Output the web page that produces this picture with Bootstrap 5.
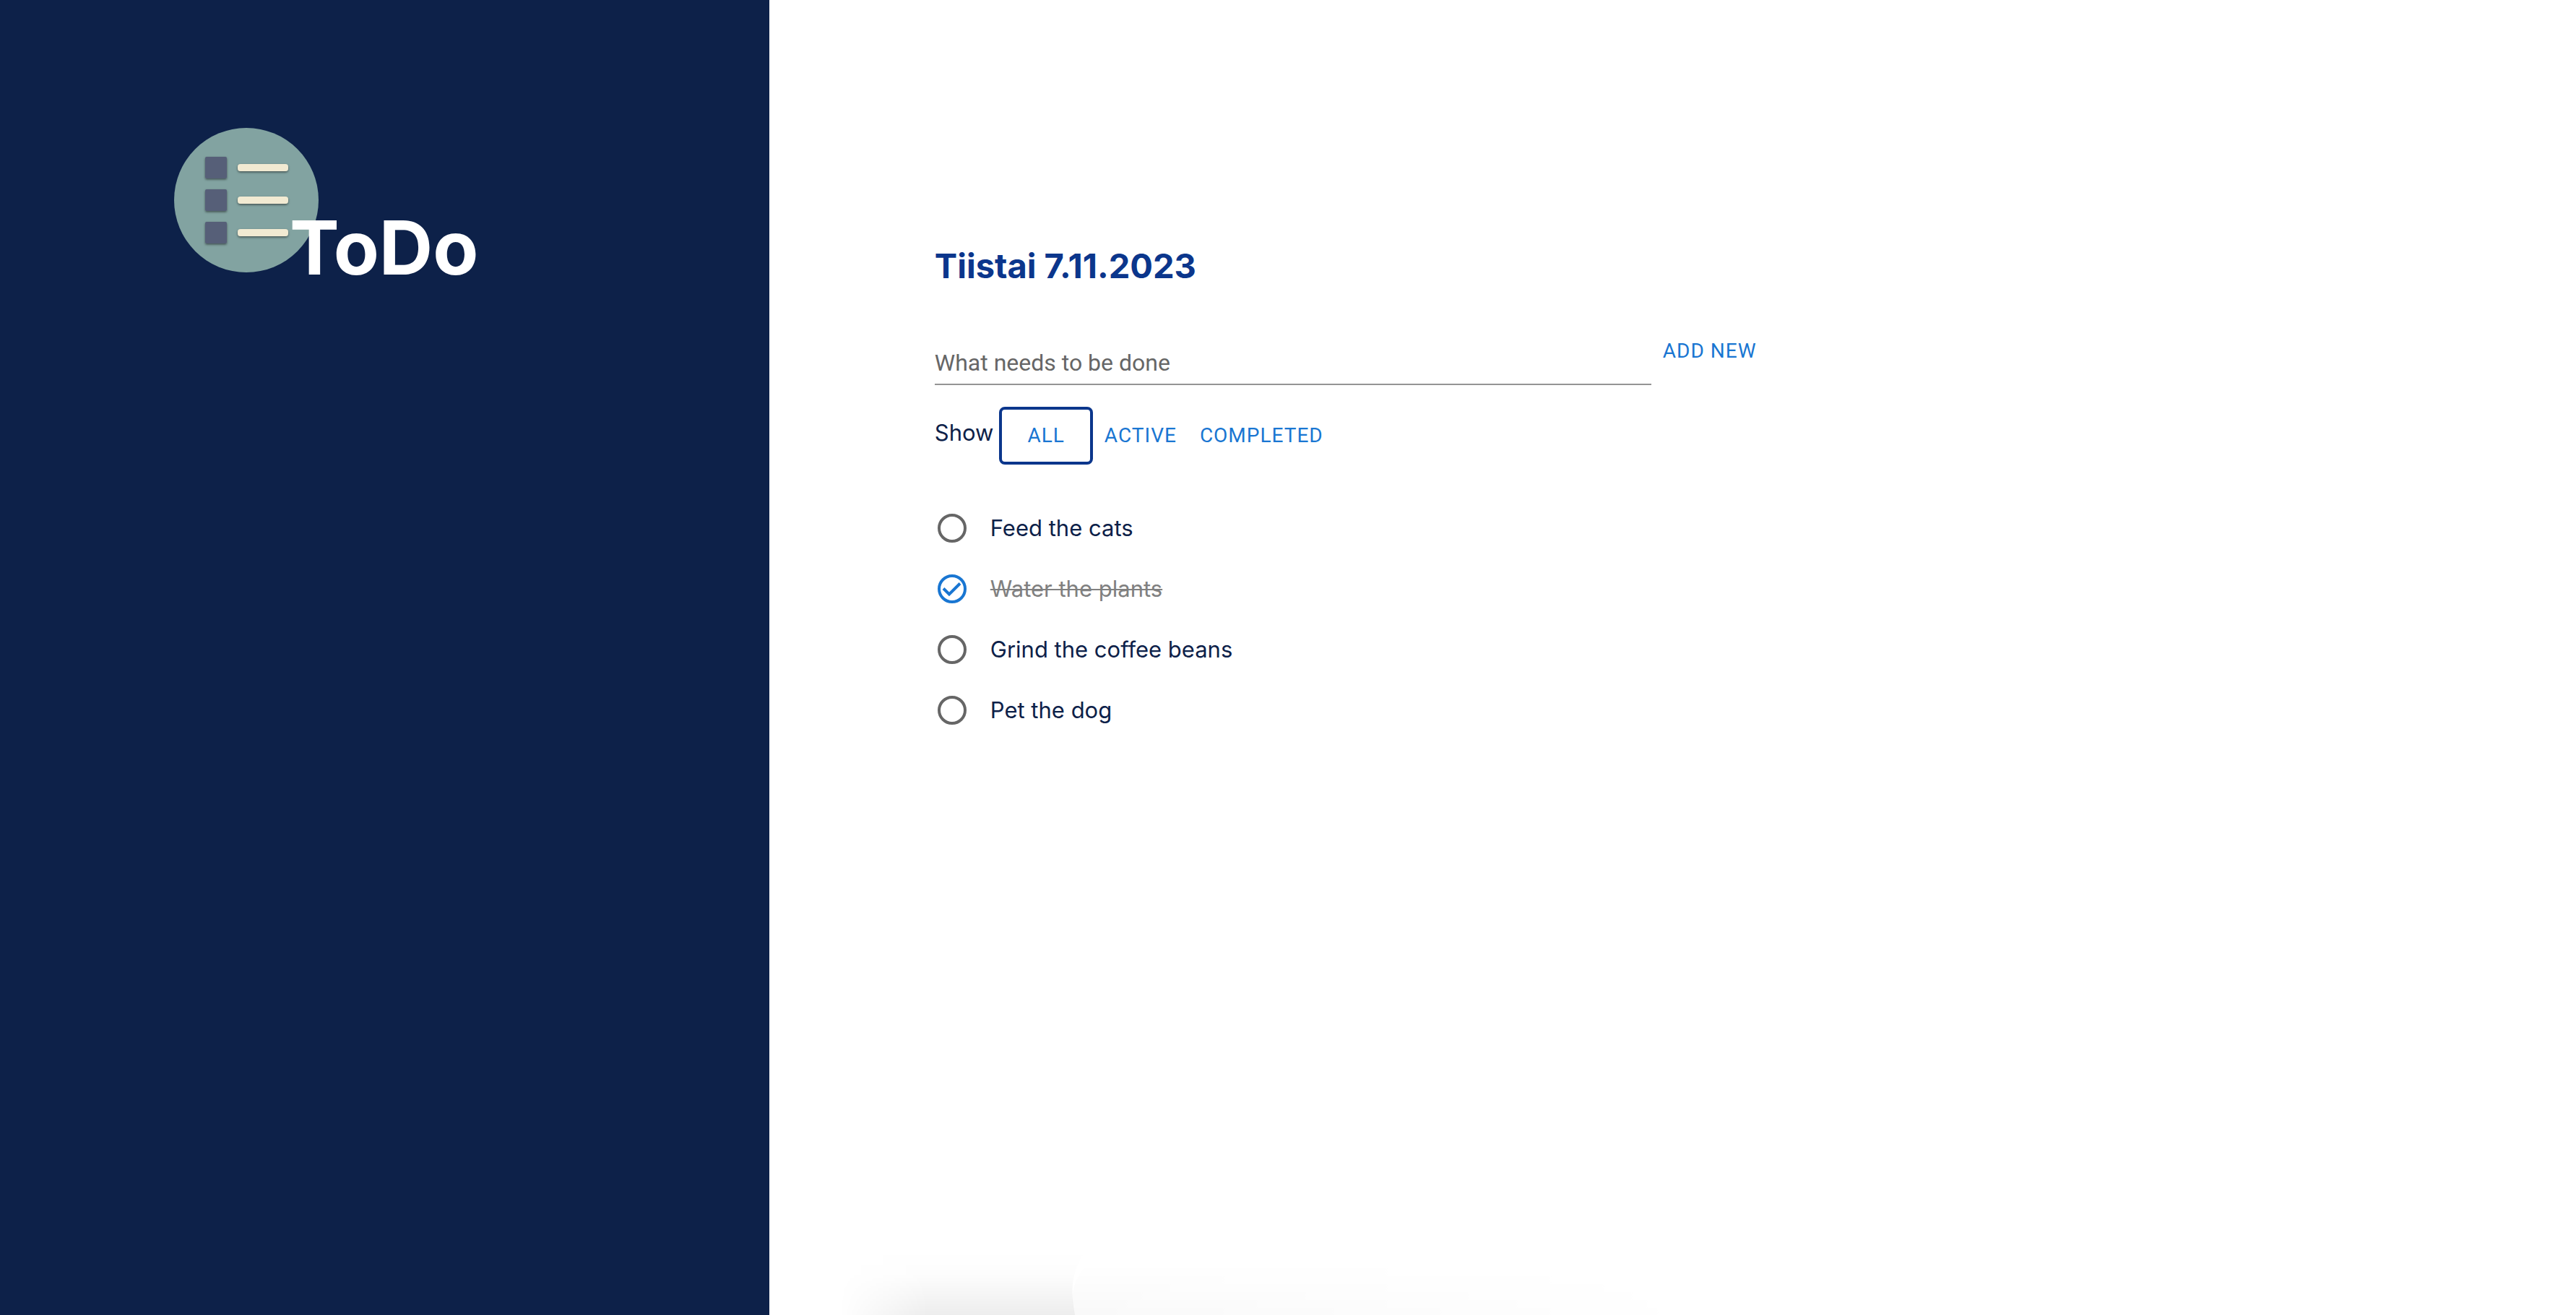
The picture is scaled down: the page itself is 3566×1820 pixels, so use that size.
<!DOCTYPE html>
<html lang="fi">
<head>
<meta charset="utf-8">
<meta name="viewport" content="width=device-width, initial-scale=1">
<title>ToDo</title>
<link href="https://cdn.jsdelivr.net/npm/bootstrap@5.3.0/dist/css/bootstrap.min.css" rel="stylesheet">
<style>
  :root { --navy: #0d2149; --royal: #0b368c; --link: #1976d2; --muted: #666; }
  body { font-family: Inter, "Liberation Sans", sans-serif; font-size: 31px; line-height: 48px; color: var(--navy); background: #fff; }
  .side-panel { flex: 0 0 29.86%; background: var(--navy); padding: 177px 0 0 241px; }
  .logo-art { width: 200px; height: 200px; flex: none; }
  .logo-name { font-size: 103px; line-height: 112px; font-weight: 700; color: #fff; margin: 0 0 -22px -40px; z-index: 1; }
  .todo-main { padding: 336px 0 0 229px; }
  .day-title { font-size: 47px; line-height: 64px; font-weight: 700; color: var(--royal); margin-bottom: 62px; }
  .new-task { flex: 0 1 992px; min-width: 0; font-family: Roboto, sans-serif; font-size: 32px; line-height: 46px; height: 71px; padding: 18px 0 7px; border: 0; border-bottom: 2px solid #949494; border-radius: 0; background: none; color: var(--navy); }
  .new-task::placeholder { color: var(--muted); opacity: 1; }
  .new-task:focus { box-shadow: none; background: none; }
  .text-btn { font-family: Roboto, sans-serif; font-size: 28px; line-height: 48px; letter-spacing: 1px; color: var(--link); padding: 12px; border: 4px solid transparent; border-radius: 8px; text-transform: uppercase; }
  .text-btn.add-btn { padding: 0; border: 0; margin-left: 16px; white-space: nowrap; }
  .filter-bar .text-btn.active { padding: 12px 35px; margin-left: 8px; border-color: var(--royal); background: none; color: var(--link); }
  .filter-bar { margin-top: 30px; }
  .filter-label { padding-bottom: 8px; }
  .task-list { margin: 46px 0 0; }
  .task-row { min-height: 84px; gap: 33px; padding-left: 4px; }
  .task-row .form-check-input { width: 40px; height: 40px; flex: none; margin: 0; border: 4px solid var(--muted); border-radius: 50%; background: none; }
  .task-row .form-check-input:checked { border-color: var(--link); background: url("data:image/svg+xml,%3Csvg xmlns='http://www.w3.org/2000/svg' viewBox='0 0 32 32'%3E%3Cpath d='M4 15.5l8 8L27 8.500' fill='none' stroke='%231976d2' stroke-width='4'/%3E%3C/svg%3E") center / 32px 32px no-repeat; }
  .task-row .form-check-input:checked + label { opacity: 1; color: gray; text-decoration: line-through; text-decoration-thickness: 2px; }
  .dock-shade { left: 1100px; width: 1300px; height: 90px; pointer-events: none; }
</style>
<script src="https://cdn.jsdelivr.net/npm/bootstrap@5.3.0/dist/js/bootstrap.bundle.min.js"></script>
</head>
<body>
<div class="d-flex min-vh-100 position-relative overflow-hidden">
  <aside class="side-panel">
    <div class="d-flex align-items-end">
      <svg class="logo-art" viewBox="0 0 200 200" aria-hidden="true">
        <defs><filter id="soft" x="-20%" y="-60%" width="140%" height="260%"><feDropShadow dx="0" dy="1.500" stdDeviation="1.500" flood-color="#000" flood-opacity=".5"/></filter></defs>
        <circle cx="100" cy="100" r="100" fill="#82a3a1"/>
        <g fill="#565f78" filter="url(#soft)">
          <rect x="43" y="40" width="30" height="30" rx="2"/><rect x="43" y="85" width="30" height="30" rx="2"/><rect x="43" y="130" width="30" height="30" rx="2"/>
        </g>
        <g fill="#f1ead2" filter="url(#soft)">
          <rect x="88" y="50" width="70" height="10" rx="4"/><rect x="88" y="95" width="70" height="10" rx="4"/><rect x="88" y="140" width="70" height="10" rx="4"/>
        </g>
      </svg>
      <h1 class="logo-name">ToDo</h1>
    </div>
  </aside>
  <main class="todo-main flex-grow-1">
    <h2 class="day-title">Tiistai 7.11.2023</h2>
    <form class="d-flex align-items-start">
      <input class="form-control new-task" type="text" placeholder="What needs to be done" aria-label="What needs to be done">
      <button class="btn text-btn add-btn" type="button">Add new</button>
    </form>
    <div class="filter-bar d-flex align-items-center">
      <span class="filter-label">Show</span>
      <button class="btn text-btn active" type="button">All</button>
      <button class="btn text-btn" type="button">Active</button>
      <button class="btn text-btn" type="button">Completed</button>
    </div>
    <ul class="task-list list-unstyled">
      <li class="task-row d-flex align-items-center"><input class="form-check-input" type="checkbox" id="t1"><label for="t1">Feed the cats</label></li>
      <li class="task-row d-flex align-items-center"><input class="form-check-input" type="checkbox" id="t2" checked><label for="t2">Water the plants</label></li>
      <li class="task-row d-flex align-items-center"><input class="form-check-input" type="checkbox" id="t3"><label for="t3">Grind the coffee beans</label></li>
      <li class="task-row d-flex align-items-center"><input class="form-check-input" type="checkbox" id="t4"><label for="t4">Pet the dog</label></li>
    </ul>
  </main>
  <svg class="dock-shade position-absolute bottom-0" viewBox="0 0 1300 90" preserveAspectRatio="none" aria-hidden="true">
    <defs>
      <linearGradient id="fall" x1="0" y1="0" x2="0" y2="1"><stop offset="0" stop-color="#000" stop-opacity="0"/><stop offset=".4" stop-color="#000" stop-opacity=".01"/><stop offset="1" stop-color="#000" stop-opacity=".07"/></linearGradient>
      <linearGradient id="pale" x1="0" y1="0" x2="0" y2="1"><stop offset="0" stop-color="#000" stop-opacity="0"/><stop offset="1" stop-color="#000" stop-opacity=".025"/></linearGradient>
      <linearGradient id="edge"><stop offset=".15" stop-color="#000"/><stop offset=".45" stop-color="#fff"/></linearGradient>
      <linearGradient id="edge2"><stop offset="0" stop-color="#fff"/><stop offset="1" stop-color="#000"/></linearGradient>
      <mask id="m1" maskUnits="userSpaceOnUse" x="0" y="0" width="410" height="90"><rect width="410" height="90" fill="url(#edge)"/></mask>
      <mask id="m2" maskUnits="userSpaceOnUse" x="370" y="0" width="900" height="90"><rect x="370" width="900" height="90" fill="url(#edge2)"/></mask>
    </defs>
    <path d="M0 0H405Q376 32 388 90H0Z" fill="url(#fall)" mask="url(#m1)"/>
    <path d="M405 20H1250V90H388Q376 50 405 20Z" fill="url(#pale)" mask="url(#m2)"/>
  </svg>
</div>
</body>
</html>
